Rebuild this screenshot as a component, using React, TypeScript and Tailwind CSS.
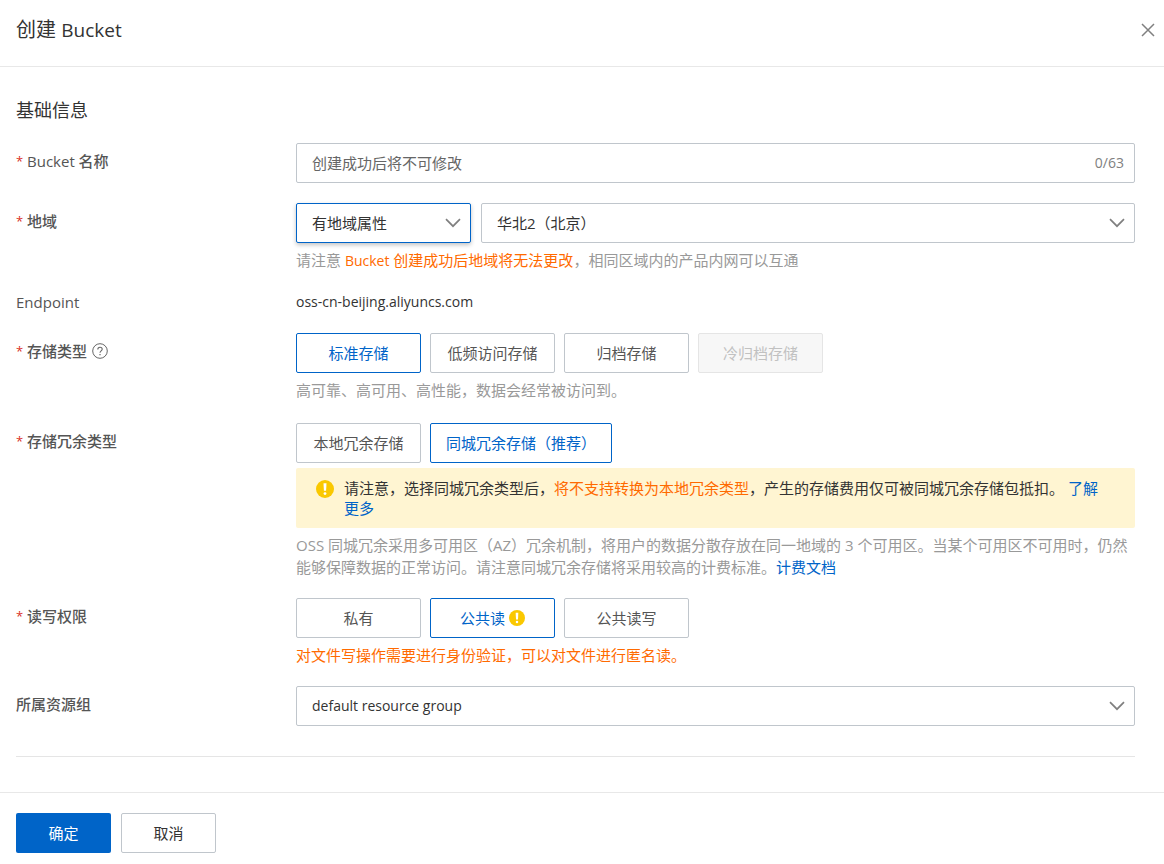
import React, { useState } from 'react';
import clsx from 'clsx';

type Option = {
  value: string;
  label: string;
  disabled?: boolean;
  warning?: boolean;
};

const storageClasses: Option[] = [
  { value: 'standard', label: '标准存储' },
  { value: 'ia', label: '低频访问存储' },
  { value: 'archive', label: '归档存储' },
  { value: 'cold-archive', label: '冷归档存储', disabled: true },
];

const redundancyTypes: Option[] = [
  { value: 'lrs', label: '本地冗余存储' },
  { value: 'zrs', label: '同城冗余存储（推荐）' },
];

const aclTypes: Option[] = [
  { value: 'private', label: '私有' },
  { value: 'public-read', label: '公共读', warning: true },
  { value: 'public-read-write', label: '公共读写' },
];

const WarningIcon = ({ className }: { className?: string }) => (
  <svg viewBox="0 0 18 18" className={clsx('shrink-0', className)} aria-hidden="true">
    <circle cx="9" cy="9" r="9" fill="#fac800" />
    <path d="M7.5 3.2h3l-.4 7.6H7.9z" fill="#fff" />
    <circle cx="9" cy="13.6" r="1.4" fill="#fff" />
  </svg>
);

const HelpIcon = () => (
  <svg viewBox="0 0 16 16" className="w-4 h-4 shrink-0" fill="none" stroke="#666" aria-hidden="true">
    <circle cx="8" cy="8" r="7.3" />
    <path d="M5.8 6.4c0-1.4 1-2.2 2.2-2.2s2.2.8 2.2 2c0 1.6-2.2 1.7-2.2 3.5" strokeWidth="1.1" />
    <path d="M8 10.9v1.3" strokeWidth="1.2" />
  </svg>
);

const Chevron = () => (
  <svg
    viewBox="0 0 16 10"
    className="absolute right-[10px] top-[15px] w-4 h-[10px] pointer-events-none"
    fill="none"
    stroke="#808080"
    strokeWidth="1.7"
    aria-hidden="true"
  >
    <path d="M1 1.2l7 7 7-7" />
  </svg>
);

type RowProps = {
  id: string;
  title: string;
  required?: boolean;
  help?: boolean;
  group?: boolean;
  compact?: boolean;
  children: React.ReactNode;
};

const Row = ({ id, title, required, help, group, compact, children }: RowProps) => (
  <div className="flex">
    <div
      className={clsx(
        'w-[280px] shrink-0 flex items-center self-start font-medium text-[#555]',
        compact ? 'h-[22px]' : 'h-9'
      )}
    >
      {required && (
        <span className="w-[11px] text-[13px] font-normal text-[#d93026]" aria-hidden="true">*</span>
      )}
      {group ? <span id={id}>{title}</span> : <label htmlFor={id}>{title}</label>}
      {help && (
        <button type="button" aria-label={`${title}说明`} className="ml-[5px]">
          <HelpIcon />
        </button>
      )}
    </div>
    <div className="flex-1 min-w-0">{children}</div>
  </div>
);

type SelectProps = {
  id: string;
  options: string[];
  className?: string;
  active?: boolean;
  label?: string;
};

const Select = ({ id, options, className, active, label }: SelectProps) => (
  <div className={clsx('relative', className)}>
    <select
      id={id}
      aria-label={label}
      className={clsx(
        'block w-full h-10 pl-[15px] pr-9 appearance-none bg-white border rounded-xs outline-none text-[#333]',
        active ? 'border-[#0064c8] shadow-[0_2px_4px_rgba(0,0,0,0.24)]' : 'border-[#c0c6cc]'
      )}
    >
      {options.map((o) => (
        <option key={o}>{o}</option>
      ))}
    </select>
    <Chevron />
  </div>
);

type RadioButtonsProps = {
  name: string;
  options: Option[];
  value: string;
  onChange: (value: string) => void;
};

const RadioButtons = ({ name, options, value, onChange }: RadioButtonsProps) => (
  <div role="radiogroup" aria-labelledby={name} className="flex flex-wrap gap-[9px]">
    {options.map((o) => (
      <label
        key={o.value}
        className={clsx(
          'relative h-10 min-w-[125px] px-[15px] flex items-center justify-center gap-1 border rounded-xs',
          o.disabled
            ? 'border-[#e5e5e5] bg-[#f7f7f7] text-[#c1c1c1] cursor-not-allowed'
            : o.value === value
              ? 'border-[#0064c8] text-[#0064c8] cursor-pointer'
              : 'border-[#c0c6cc] text-[#555] cursor-pointer'
        )}
      >
        <input
          type="radio"
          className="sr-only"
          name={name}
          value={o.value}
          checked={o.value === value}
          disabled={o.disabled}
          onChange={() => onChange(o.value)}
        />
        {o.label}
        {o.warning && <WarningIcon className="w-4 h-4" />}
      </label>
    ))}
  </div>
);

const App: React.FC = () => {
  const [bucketName, setBucketName] = useState('');
  const [storageClass, setStorageClass] = useState('standard');
  const [redundancy, setRedundancy] = useState('zrs');
  const [acl, setAcl] = useState('public-read');

  return (
    <form
      className="bg-white font-['Open_Sans','Noto_Sans_CJK_SC',sans-serif] text-[15px] leading-[22px] text-[#333]"
      onSubmit={(e) => e.preventDefault()}
    >
      <header className="h-[67px] pl-4 pr-2 pb-[6px] flex items-center justify-between border-b border-[#e8e8e8]">
        <h1 className="text-[20px] leading-7">
          创建 <span className="text-[19px] leading-5">Bucket</span>
        </h1>
        <button type="button" aria-label="关闭">
          <svg viewBox="0 0 16 16" className="w-4 h-4" fill="none" stroke="#808080" strokeWidth="1.5">
            <path d="M2 2l12 12M14 2L2 14" />
          </svg>
        </button>
      </header>

      <main className="pl-4 pr-[29px] pt-[30px] pb-[35px]">
        <h2 className="text-[18px] leading-[26px]">基础信息</h2>

        <div className="mt-5 pb-[30px] flex flex-col gap-5 border-b border-[#e5e5e5]">
          <Row id="bucket-name" title="Bucket 名称" required>
            <div className="h-10 pl-[15px] pr-[10px] flex items-center border border-[#c0c6cc] rounded-xs">
              <input
                id="bucket-name"
                type="text"
                maxLength={63}
                value={bucketName}
                onChange={(e) => setBucketName(e.target.value)}
                placeholder="创建成功后将不可修改"
                className="flex-1 min-w-0 outline-none placeholder:text-[#666]"
              />
              <span className="text-[14px] text-[#808080]">{bucketName.length}/63</span>
            </div>
          </Row>

          <Row id="region-type" title="地域" required>
            <div className="flex gap-[10px]">
              <Select id="region-type" options={['有地域属性', '无地域属性']} className="w-[175px]" active />
              <Select id="region" label="地域名称" options={['华北2（北京）', '华东1（杭州）']} className="flex-1" />
            </div>
            <p className="pt-[6px] text-[#999]">
              请注意{' '}
              <span className="text-[#ff6a00]">
                <span className="text-[14px] leading-5">Bucket</span> 创建成功后地域将无法更改
              </span>
              ，相同区域内的产品内网可以互通
            </p>
          </Row>

          <Row id="endpoint" title="Endpoint" group compact>
            <p className="text-[14px]">oss-cn-beijing.aliyuncs.com</p>
          </Row>

          <Row id="storage-class" title="存储类型" required help group>
            <RadioButtons
              name="storage-class"
              options={storageClasses}
              value={storageClass}
              onChange={setStorageClass}
            />
            <p className="pt-[6px] pb-[2px] text-[#999]">高可靠、高可用、高性能，数据会经常被访问到。</p>
          </Row>

          <Row id="redundancy" title="存储冗余类型" required group>
            <RadioButtons
              name="redundancy"
              options={redundancyTypes}
              value={redundancy}
              onChange={setRedundancy}
            />
            <div className="mt-[5px] py-[10px] pl-5 pr-[30px] flex gap-[10px] bg-[#fff5d2] rounded-xs leading-5">
              <WarningIcon className="w-[18px] h-[18px] mt-[2px]" />
              <p>
                请注意，选择同城冗余类型后，<span className="text-[#ff6a00]">将不支持转换为本地冗余类型</span>
                ，产生的存储费用仅可被同城冗余存储包抵扣。{' '}
                <a href="#" className="text-[#0064c8]">了解更多</a>
              </p>
            </div>
            <p className="pt-[6px] text-[#999]">
              OSS 同城冗余采用多可用区（AZ）冗余机制，将用户的数据分散存放在同一地域的 3 个可用区。当某个可用区不可用时，仍然能够保障数据的正常访问。请注意同城冗余存储将采用较高的计费标准。
              <a href="#" className="text-[#0064c8]">计费文档</a>
            </p>
          </Row>

          <Row id="acl" title="读写权限" required group>
            <RadioButtons name="acl" options={aclTypes} value={acl} onChange={setAcl} />
            <p className="pt-[6px] text-[#ff6a00]">对文件写操作需要进行身份验证，可以对文件进行匿名读。</p>
          </Row>

          <Row id="resource-group" title="所属资源组">
            <Select id="resource-group" options={['default resource group']} className="text-[14px]" />
          </Row>
        </div>
      </main>

      <footer className="px-4 pt-5 pb-[11px] flex gap-[10px] border-t border-[#e8e8e8]">
        <button type="submit" className="w-[95px] h-10 rounded-xs bg-[#0064c8] text-white">
          确定
        </button>
        <button type="button" className="w-[95px] h-10 rounded-xs border border-[#c0c6cc]">
          取消
        </button>
      </footer>
    </form>
  );
};

export default App;
